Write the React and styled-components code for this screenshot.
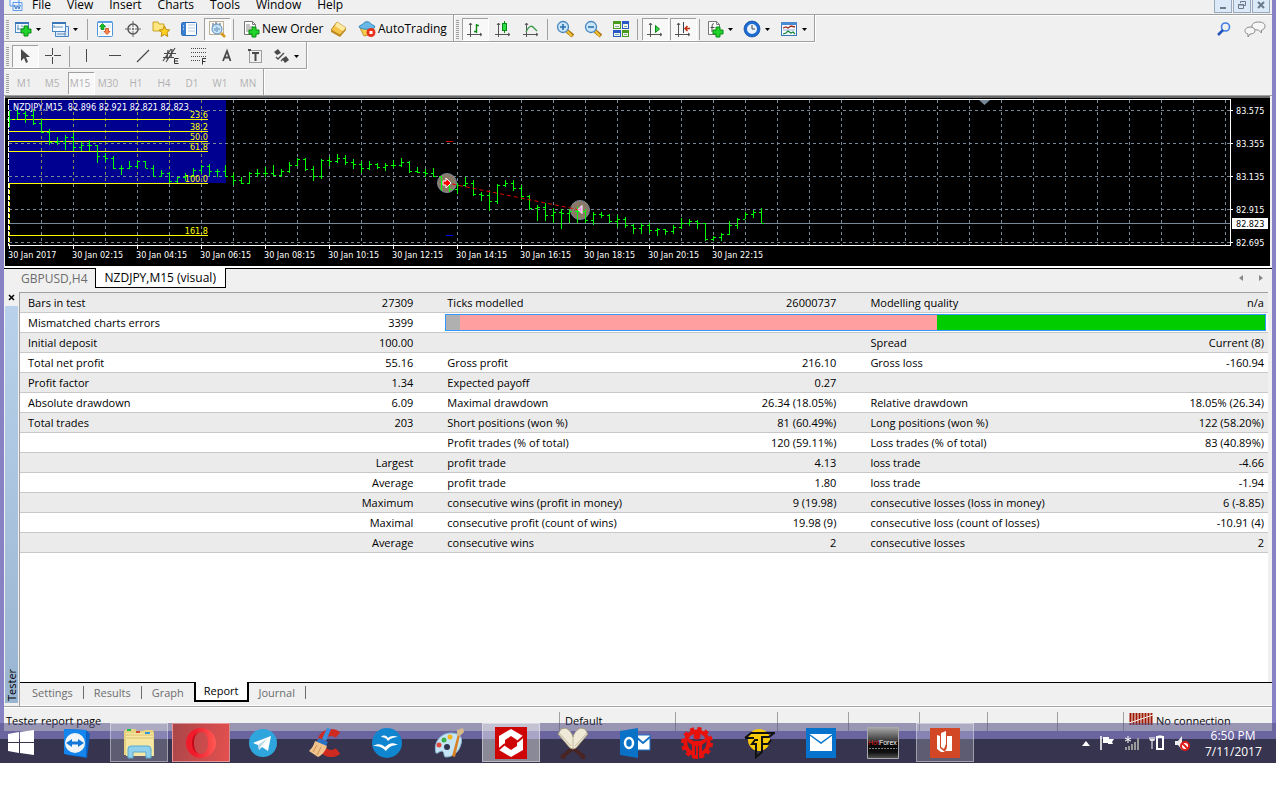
import React from 'react';
import styled, { createGlobalStyle, css } from 'styled-components';

const Colours = {
  face: '#f0f0f0',
  frame: '#8782c3',
  shadow: '#a0a0a0',
  muted: '#6d6d6d',
  grid: '#778899',
  bar: '#00ff00',
  fibo: '#ffff00',
};
const fontUi = '"Open Sans", "Noto Sans", sans-serif';
const fontChart = '"DejaVu Sans Condensed", "DejaVu Sans", sans-serif';

const GlobalStyle = createGlobalStyle`
  * {
    box-sizing: border-box;
  }
  body {
    margin: 0;
    background: #fff;
    color: #000;
    font-family: ${fontUi};
    font-size: 11px;
    line-height: 16px;
  }
  button {
    border: 0;
    padding: 0;
    background: none;
    color: inherit;
    font: inherit;
  }
  svg {
    display: block;
    flex: none;
  }
`

const Screen = styled.div`
  margin-right: 4px;
  overflow: hidden;
`
const Terminal = styled.main`
  border: solid ${Colours.frame};
  border-width: 0 4px;
  background: ${Colours.face};
`

/* menu */
const MenuBar = styled.header`
  display: flex;
  align-items: flex-end;
  height: 15px;
  padding-left: 5px;
  border-bottom: 1px solid ${Colours.shadow};
  box-shadow: 0 1px #fff;
`
const MenuItems = styled.nav`
  display: flex;
  flex: 1;
  gap: 16px;
  padding: 0 0 4px 9px;
  font-size: 12px;
  line-height: 10px;
`
const WindowButtons = styled.div`
  display: flex;
  gap: 1px;
  padding: 0 2px 1px 0;
`
const WindowButton = styled.button`
  display: flex;
  align-items: flex-end;
  justify-content: center;
  width: 18px;
  height: 16px;
  padding-bottom: 3px;
  border: 1px solid #98a9bd;
  background: #dce9f6;
`

/* toolbars */
const ToolRow = styled.div`
  display: flex;
  height: 27px;
  ${p => p.$last && css`
    border-bottom: 1px solid ${Colours.shadow};
  `}
`
const Toolbar = styled.div`
  display: flex;
  align-items: center;
  padding: 2px 0 0 2px;
  border: solid ${Colours.shadow};
  border-width: 0 1px 1px 0;
  box-shadow: 1px 1px #fff;
  ${p => p.$open && css`
    border-bottom: 0;
    box-shadow: 1px 0 #fff;
  `}
`
const Grip = styled.span`
  width: 3px;
  height: 19px;
  margin-right: 2px;
  background: repeating-linear-gradient(#a0a0a0 0 1px, #f0f0f0 1px 2px);
`
const Divider = styled.span`
  width: 1px;
  height: 21px;
  margin: 0 3px 0 2px;
  background: ${Colours.shadow};
`
const Tool = styled.button`
  display: flex;
  align-items: center;
  justify-content: center;
  width: 26px;
  height: 22px;
  margin: 0 1px;
  color: #000;
  &:disabled {
    padding-right: 2px;
    color: #b0b0b0;
    font-size: 10px;
  }
  ${p => p.$pressed && css`
    background: #f8f8f8;
    box-shadow: inset 1px 1px #a0a0a0, 1px 1px #fff;
  `}
`
const DropTool = styled.button`
  display: flex;
  align-items: center;
  gap: 4px;
  width: 37px;
  height: 22px;
  padding-left: 3px;
`
const TextTool = styled.button`
  display: flex;
  align-items: center;
  gap: 2px;
  width: ${p => p.$width};
  height: 22px;
  padding-left: 5px;
  font-size: 12px;
  line-height: 14px;
  white-space: nowrap;
`
const ToolEnd = styled.div`
  display: flex;
  align-items: center;
  gap: 12px;
  margin-left: auto;
  padding-right: 6px;
`

/* chart */
const ChartWindow = styled.section`
  display: flex;
  margin: 0 2px 0 1px;
  padding-left: 1px;
  border-top: 2px solid #696969;
  border-bottom: 2px solid #fff;
  background: #000;
`
const Plot = styled.svg`
  flex: 1;
  min-width: 0;
  height: 168px;
  font-family: ${fontChart};
  font-size: 9px;
`
const PriceScale = styled.svg`
  width: 40px;
  height: 168px;
  font-family: ${fontChart};
  font-size: 9px;
`

/* tabs */
const TabBar = styled.div`
  display: flex;
  height: 24px;
  padding-left: 1px;
  border-top: 1px solid #000;
  color: ${Colours.muted};
`
const ChartTab = styled.button`
  height: 19px;
  padding: 0 7px 0 16px;
  font-size: 12px;
  line-height: 16px;
  ${p => p.$active && css`
    padding: 0 9px;
    margin-top: -1px;
    height: 20px;
    border: solid #000;
    border-width: 0 1px 1px;
    background: #fff;
    color: #000;
  `}
`
const TabArrows = styled.div`
  display: flex;
  gap: 13px;
  margin-left: auto;
  padding: 5px 8px 0 0;
`
const TesterTabs = styled.div`
  display: flex;
  align-items: flex-start;
  height: 24px;
  border-top: 1px solid #000;
  border-bottom: 1px solid #fff;
  padding-left: 2px;
  background: ${Colours.face};
  color: ${Colours.muted};
`
const TesterTab = styled.button`
  height: 13px;
  margin-top: 3px;
  padding: 0 10px;
  border-right: ${p => (p.$bar ? `1px solid ${Colours.muted}` : '0')};
  line-height: 10px;
  ${p => p.$active && css`
    height: 20px;
    margin-top: -1px;
    padding: 0 8px;
    line-height: 18px;
    border: solid #000;
    border-width: 0 2px 2px;
    background: #fff;
    color: #000;
  `}
`

/* tester */
const Tester = styled.section`
  display: flex;
  border-bottom: 1px solid ${Colours.shadow};
`
const TesterSide = styled.div`
  display: flex;
  flex-direction: column;
  align-items: center;
  width: 15px;
  padding: 0 1px 3px;
`
const CloseButton = styled.button`
  display: flex;
  align-items: center;
  justify-content: center;
  width: 13px;
  height: 14px;
  padding-bottom: 4px;
`
const TesterTitle = styled.div`
  flex: 1;
  width: 13px;
  padding-top: 2px;
  writing-mode: vertical-rl;
  transform: rotate(180deg);
  background: linear-gradient(#99b4d1, #b9d1ea);
  line-height: 13px;
`
const TesterBody = styled.div`
  flex: 1;
  min-width: 0;
  border-left: 1px solid ${Colours.shadow};
`
const ReportArea = styled.div`
  min-height: 390px;
  margin-right: 4px;
  border-top: 1px solid ${Colours.shadow};
  background: #fff;
`
const ReportTable = styled.table`
  width: 100%;
  table-layout: fixed;
  border-collapse: separate;
  border-spacing: 0;
  td {
    height: 20px;
    padding: 0 0 0 8px;
    border-bottom: 1px solid #c8c8c8;
    line-height: 19px;
    white-space: nowrap;
  }
  tr:nth-child(odd) td {
    background: #ebebeb;
  }
  td:nth-child(even) {
    padding: 0 26px 0 0;
    text-align: right;
  }
  td:last-child {
    padding-right: 4px;
  }
  td[colspan] {
    padding: 1px 2px 1px 6px;
  }
`
const Quality = styled.div`
  display: flex;
  height: 17px;
  border: 1px solid #3399ff;
  background: #00cc00;
`
const QualityPart = styled.span`
  background: ${p => p.$colour};
`

/* status bar */
const StatusBar = styled.footer`
  display: flex;
  height: 24px;
  padding-top: 4px;
  border-top: 1px solid #fff;
  line-height: 18px;
`
const StatusCell = styled.div`
  display: flex;
  gap: 3px;
  flex: ${p => (p.$width ? `0 0 ${p.$width}px` : '1')};
  padding-left: ${p => (p.$width ? '5px' : '2px')};
  border-left: ${p => (p.$width ? `1px solid ${Colours.shadow}` : '0')};
`

/* taskbar */
const Taskbar = styled.footer`
  position: relative;
  display: flex;
  gap: 4px;
  height: 40px;
  margin-top: -8px;
  color: #fff;
  background: linear-gradient(
    rgba(80, 76, 130, .55) 0 8px,
    #6a659f 8px 16px,
    #36344f 16px
  );
`
const StartButton = styled.button`
  width: 44px;
  padding-left: 8px;
`
const TaskButton = styled.button`
  display: flex;
  align-items: center;
  justify-content: center;
  width: 58px;
  height: 39px;
  ${p => p.$tint && css`
    border: 1px solid rgba(255, 255, 255, .4);
    background: ${p.$tint};
  `}
`
const Tray = styled.div`
  display: flex;
  align-items: center;
  gap: 9px;
  margin-left: auto;
  padding-right: 15px;
`
const Clock = styled.time`
  width: 56px;
  margin-left: 6px;
  padding-top: 2px;
  font-size: 12px;
  line-height: 16px;
  text-align: center;
  white-space: nowrap;
`

const Icon = ({ size = 18, crisp, children }) => (
  <svg width={size} height={size} viewBox={`0 0 ${size} ${size}`} fill="none" shapeRendering={crisp ? 'crispEdges' : 'auto'} aria-hidden="true">
    {children}
  </svg>
);

const Caret = () => (
  <svg width="5" height="3" viewBox="0 0 5 3" aria-hidden="true"><path d="M0 0h5L2.5 3z" fill="#000" /></svg>
);

const Plus = ({ x = 8, y = 8 }) => (
  <path transform={`translate(${x} ${y})`} d="M3 0h4v3h3v4h-3v3h-4v-3h-3v-4h3z" fill="#1fd32b" stroke="#0a8a14" strokeWidth="1" />
);

const MdiIcon = () => (
  <Icon size={14}>
    <path d="M1 0v6h9V0M4 2.500h9v8H4z" fill="#eaf3ff" stroke="#5b9bea" />
    <path d="M5 5l2 4 1.500-3L10 9l1.500-4" stroke="#3a78c8" />
  </Icon>
);
const NewChartIcon = () => (
  <Icon>
    <rect x="1.5" y="2.5" width="13" height="10" fill="#eef6ff" stroke="#4a86c5" />
    <path d="M1 3h14" stroke="#3b77b8" strokeWidth="2" />
    <path d="M4 5v5M3 9h8M8 5v2" stroke="#6890b8" />
    <Plus x={7} y={6} />
  </Icon>
);
const ProfilesIcon = () => (
  <Icon>
    <path d="M4.500 6.500h13v10h-13z" fill="#dcebfb" stroke="#4a86c5" />
    <rect x="1.500" y="2.500" width="13" height="9" fill="#f3f9ff" stroke="#4a86c5" />
    <path d="M1 3h14" stroke="#3b77b8" strokeWidth="2" />
    <path d="M3 5v3M3 7h9M6 14h9M14 12v4" stroke="#6890b8" />
  </Icon>
);
const MarketIcon = () => (
  <Icon>
    <rect x="1.500" y="1.500" width="15" height="15" rx="1" fill="#fff" stroke="#4f95da" />
    <path d="M2 2h14" stroke="#5ba2e4" strokeWidth="2" />
    <path d="M9 5h6M9 7h6M3 12h5M3 14h5" stroke="#cfe0f0" />
    <path d="M6.500 3.500l3 3H8v3H5v-3H3.500z" fill="#17c227" stroke="#0a8a14" strokeWidth=".8" />
    <path d="M11 14.500l-3-3h1.500v-3h3v3H14z" fill="#ff8a4a" stroke="#c6421b" strokeWidth=".8" />
  </Icon>
);
const CrosshairIcon = () => (
  <Icon>
    <circle cx="9" cy="9" r="5" stroke="#555" strokeWidth="1.500" />
    <path d="M9 1v6M9 11v6M1 9h6M11 9h6" stroke="#666" />
    <circle cx="9" cy="9" r="1" fill="#555" />
  </Icon>
);
const NavigatorIcon = () => (
  <Icon>
    <path d="M1 2h5l1 2h5v7H1z" fill="#ffe680" stroke="#c9a227" />
    <path d="M12.500 6l1.600 3.600 3.600.4-2.700 2.500.8 4-3.300-2-3.400 2 .8-4L7.200 10l3.700-.4z" fill="#ffd21f" stroke="#b98a12" />
  </Icon>
);
const TerminalIcon = () => (
  <Icon>
    <rect x="1.500" y="2.500" width="15" height="13" rx="1" fill="#fff" stroke="#2a6cbb" />
    <rect x="2" y="3" width="4" height="12" fill="#3c7fd0" />
    <path d="M3 6h1M3 9h1" stroke="#fff" />
    <path d="M8 5h7M8 8h7M8 11h7" stroke="#b7cbe2" />
  </Icon>
);
const TesterIcon = () => (
  <Icon>
    <rect x="1.500" y="1.500" width="14" height="13" fill="#fafafa" stroke="#bbb093" />
    <path d="M5 3v4M8 2v5M12 3v3" stroke="#556" />
    <circle cx="9" cy="9" r="5" fill="#bfe0f8" fillOpacity=".85" stroke="#5d8db8" />
    <path d="M7 11V8M9 12V7M11 10V8" stroke="#5586b3" />
    <path d="M13 13l4 4" stroke="#d59b1f" strokeWidth="2.500" />
  </Icon>
);
const OrderIcon = ({ fx }) => (
  <Icon>
    <path d="M2.500 1.500h8l3 3v10h-11z" fill="#fff" stroke="#777" />
    <path d="M10.500 1.500v3h3" stroke="#777" />
    {fx
      ? <path d="M8 4c-2-1-2 1-2 8M4.500 7.500h4" stroke="#444" />
      : <path d="M4 5h4M4 7h7M4 9h5M4 11h4" stroke="#888" />}
    <Plus x={7} y={7} />
  </Icon>
);
const EditorIcon = () => (
  <Icon>
    <path d="M7 2l9 6-6 7-9-5z" fill="#f4c54a" stroke="#b9831e" />
    <path d="M7 2l9 6-3 3-8-5z" fill="#ffe9a0" />
    <path d="M1 10l9 5v2l-9-5zM10 15l6-7v2l-6 7z" fill="#c08a20" />
  </Icon>
);
const AutoIcon = () => (
  <Icon>
    <path d="M2 8l4 8 8-2 2-6z" fill="#f3ce4d" stroke="#c4952a" />
    <path d="M1 7c0-2 4-2 4-3 1-3 7-3 8 0 0 1 4 1 4 3-3 3-13 3-16 0z" fill="#69b9e8" stroke="#3488bd" />
    <circle cx="13" cy="12.500" r="4.500" fill="#e8321e" />
    <rect x="11.500" y="11" width="3" height="3" fill="#fff" />
  </Icon>
);
const Axes = () => <path d="M4.500 3v14M1 14.500h15M3 5l1.500-2L6 5M14 13l2 1.500-2 1.500" stroke="#555" />;
const BarsIcon = () => (
  <Icon><Axes /><path d="M10.500 4v9M8 11.500h2.500M10.500 5.500H13" stroke="#0a8a14" strokeWidth="1.400" /></Icon>
);
const CandleIcon = () => (
  <Icon><Axes /><path d="M10.500 1v12" stroke="#0a8a14" /><rect x="8.500" y="3.500" width="4" height="7" fill="#2fdc45" stroke="#0a8a14" /></Icon>
);
const LineIcon = () => (
  <Icon><Axes /><path d="M4 12c3-7 6-6 7-5l4 4" stroke="#3a9a48" strokeWidth="1.300" /></Icon>
);
const ZoomIcon = ({ plus }) => (
  <Icon>
    <path d="M11 11l6 5" stroke="#a87410" strokeWidth="4" />
    <path d="M11 11l5 5" stroke="#f1c435" strokeWidth="2" />
    <circle cx="7" cy="7" r="5.500" fill="#c9e6fb" stroke="#4785bd" strokeWidth="1.300" />
    <path d={plus ? 'M4 7h6M7 4v6' : 'M4 7h6'} stroke="#2d6fae" strokeWidth="1.600" />
  </Icon>
);
const TileIcon = () => (
  <Icon crisp>
    <path d="M1 1h8v8H1zM10 10h7v7h-7z" fill="#4a9a1c" />
    <path d="M10 1h7v8h-7zM1 10h8v7H1z" fill="#2758c4" />
    <path d="M2 4h6v4H2zM11 4h5v4h-5zM2 13h6v3H2zM11 13h5v3h-5z" fill="#eef6ea" />
    <path d="M3 6h4M12 6h3M3 14h4M12 14h3" stroke="#8aa" />
  </Icon>
);
const ScrollIcon = () => (
  <Icon><Axes /><path d="M9.500 5.500l4 3.500-4 3.500z" fill="#35d34a" stroke="#0a8a14" /></Icon>
);
const ShiftIcon = () => (
  <Icon><Axes /><path d="M9.500 2v11" stroke="#345" /><path d="M16 8.500h-5M13.500 6L11 8.500l2.500 2.500" stroke="#c22f10" strokeWidth="1.500" /></Icon>
);
const ClockIcon = () => (
  <Icon>
    <circle cx="9" cy="9" r="6.500" fill="#e9f3fd" stroke="#1f6cd0" strokeWidth="3" />
    <circle cx="9" cy="9" r="8" stroke="#0e4a9c" strokeWidth=".7" />
    <path d="M9 5v4h3" stroke="#444" />
  </Icon>
);
const TemplateIcon = () => (
  <Icon>
    <rect x="1.500" y="2.500" width="15" height="13" fill="#f5faff" stroke="#3b77b8" />
    <path d="M1 3.500h16" stroke="#4a8ad0" strokeWidth="3" />
    <path d="M3 8l3-1 2 1 3-2 4 1" stroke="#a02a1c" strokeWidth="1.300" />
    <path d="M3 10h12" stroke="#9bb8d6" />
    <path d="M3 14l3-1 2-2 3 2 2-1 2 2" stroke="#15883a" strokeWidth="1.200" />
  </Icon>
);
const SearchIcon = () => (
  <Icon size={16}>
    <circle cx="9.500" cy="6" r="4" stroke="#3f7de0" strokeWidth="1.600" />
    <path d="M7 9l-5 5" stroke="#2453b8" strokeWidth="2.500" />
  </Icon>
);
const ChatIcon = () => (
  <svg width="22" height="18" viewBox="0 0 22 18" fill="#f6f6f6" stroke="#8b8b8b" aria-hidden="true">
    <path d="M14.500 2c4 0 6.500 1.500 6.500 4s-2 4-3.500 4v3l-3-3C10 10 8 8.500 8 6s2.500-4 6.500-4z" />
    <path d="M6 7c3 0 5 1.500 5 3.700S9 14 6 14l-2 3v-3c-2-.5-3-1.500-3-3.300S3 7 6 7z" />
  </svg>
);
const CursorIcon = () => <Icon><path d="M5 2v12l3-3 2 5 2-1-2-5h4z" fill="#4a4a4a" /></Icon>;
const CrossIcon = () => <Icon crisp><path d="M8.500 1v7M8.500 10v7M1 8.500h7M10 8.500h7" stroke="#4a4a4a" /></Icon>;
const VLineIcon = () => <Icon crisp><path d="M8.500 2v13" stroke="#4a4a4a" /></Icon>;
const HLineIcon = () => <Icon crisp><path d="M3 8.500h12" stroke="#4a4a4a" /></Icon>;
const TrendIcon = () => <Icon><path d="M3 15L15 3" stroke="#4a4a4a" strokeWidth="1.200" /></Icon>;
const ChannelIcon = () => (
  <Icon>
    <path d="M1 14L9 2M4 15l9-14M2 6.500h12M1 10.500h11M6 3l-1 9M10 2L9 11" stroke="#4a4a4a" strokeWidth="1.200" />
    <path d="M16.500 11.500h-4v5h4M12.500 14h3.500" stroke="#333" />
  </Icon>
);
const FiboIcon = () => (
  <Icon>
    <path d="M1 1.500h15M1 5.500h15M1 9.500h15M1 13.500h9" stroke="#4a4a4a" strokeDasharray="1 1" />
    <path d="M16 11.500h-3.500v6M12.500 14.500h3" stroke="#333" />
  </Icon>
);
const TextIcon = () => <Icon><path d="M5 14L9 4l3.500 10M6.500 10.500h5" stroke="#4a4a4a" strokeWidth="1.800" /></Icon>;
const LabelIcon = () => (
  <Icon>
    <rect x="3.500" y="3.500" width="12" height="12" stroke="#4a4a4a" strokeDasharray="1 1" />
    <path d="M6 6h7M9.500 6v8" stroke="#4a4a4a" strokeWidth="2" />
    <path d="M2 2h3v2H2z" fill="#4a4a4a" />
  </Icon>
);
const ArrowsIcon = () => (
  <Icon>
    <path d="M2 5l4-3 3 4-4 2zM10 12l4-3 3 4-4 3z" fill="#4a4a4a" />
    <path d="M4 10l2 2 6-6M11 12l-2 2" stroke="#4a4a4a" strokeWidth="1.300" />
  </Icon>
);

// high, low, close of every M15 bar, three steps to a pixel from the top of the plot
const quotes = [
  [50, 98, 74], [46, 76, 56], [50, 86, 62], [46, 92, 87], [75, 116, 115], [106, 152, 145], [128, 152, 140],
  [122, 168, 130], [118, 170, 160], [145, 172, 152], [138, 170, 154], [153, 206, 187], [178, 204, 193],
  [187, 226, 223], [212, 243, 221], [202, 226, 215], [200, 222, 202], [200, 222, 221], [213, 246, 245],
  [228, 248, 238], [235, 268, 260], [250, 268, 250], [238, 262, 245], [222, 248, 228], [212, 240, 217],
  [210, 246, 232], [226, 250, 230], [213, 248, 247], [236, 272, 259], [250, 270, 268], [235, 270, 238],
  [226, 250, 238], [220, 250, 236], [213, 246, 242], [226, 248, 230], [205, 236, 212], [192, 216, 196],
  [193, 230, 226], [217, 260, 246], [196, 254, 198], [190, 215, 202], [180, 207, 192], [183, 213, 205],
  [196, 225, 209], [202, 238, 223], [202, 228, 211], [207, 226, 219], [206, 232, 212], [197, 222, 214],
  [192, 218, 205], [201, 236, 232], [220, 238, 235], [226, 248, 238], [222, 250, 247], [245, 290, 268],
  [262, 295, 285], [268, 300, 272], [249, 278, 266], [258, 305, 300], [294, 320, 303], [296, 350, 322],
  [270, 330, 274], [258, 280, 268], [258, 292, 281], [274, 318, 307], [303, 348, 341], [333, 380, 340],
  [328, 380, 364], [342, 388, 355], [345, 405, 356], [345, 388, 352], [340, 388, 350], [345, 388, 379],
  [354, 392, 360], [354, 372, 364], [360, 388, 380], [364, 400, 376], [370, 403, 394], [390, 420, 403],
  [388, 420, 394], [388, 418, 409], [402, 426, 406], [405, 423, 412], [393, 420, 398], [372, 405, 388],
  [375, 396, 382], [378, 405, 388], [388, 440, 436], [426, 442, 430], [417, 440, 421], [381, 424, 394],
  [372, 405, 374], [354, 376, 361], [348, 372, 355], [342, 388, 388],
];
const quoteY = step => Math.round(step / 3) - 4;

const prices = [[12, '83.575'], [45, '83.355'], [78, '83.135'], [111, '82.915'], [144, '82.695']];
const times = [
  '30 Jan 2017', '30 Jan 02:15', '30 Jan 04:15', '30 Jan 06:15', '30 Jan 08:15', '30 Jan 10:15',
  '30 Jan 12:15', '30 Jan 14:15', '30 Jan 16:15', '30 Jan 18:15', '30 Jan 20:15', '30 Jan 22:15',
];
const fibo = [[21, '23.6'], [33, '38.2'], [43, '50.0'], [53, '61.8'], [85, '100.0'], [137, '161.8']];
const gridColumns = Array.from({ length: 38 }, (_, i) => 35.5 + i * 32);

const barPath = quotes.map(([high, low, close], i) => {
  const x = 3 + i * 8;
  const open = i ? quotes[i - 1][2] : close;
  return `M${x + 0.5} ${quoteY(high)}V${quoteY(low)}M${x - 2} ${quoteY(open) + 0.5}h2M${x + 1} ${quoteY(close) + 0.5}h2`;
}).join('');

const PriceChart = () => (
  <Plot role="img" aria-label="NZDJPY M15 chart">
    <rect x="3" y="2" width="217" height="83" fill="#000090" />
    <g stroke={Colours.grid} strokeDasharray="3 3" shapeRendering="crispEdges">
      {prices.map(([y]) => <line key={y} x1="3" x2="100%" y1={y + 0.5} y2={y + 0.5} />)}
      {gridColumns.map(x => <line key={x} x1={x} x2={x} y1="2" y2="147" />)}
      {gridColumns.slice(0, 6).map(x => <line key={x} x1={x} x2={x} y1="2" y2="85" stroke="#8a8a50" />)}
    </g>
    <g shapeRendering="crispEdges">
      <line x1="3" x2="100%" y1="125.5" y2="125.5" stroke={Colours.grid} />
      {fibo.map(([y]) => <line key={y} x1="3" x2="202" y1={y + 0.5} y2={y + 0.5} stroke={Colours.fibo} />)}
      <line x1="3.5" x2="3.5" y1="86" y2="147" stroke={Colours.fibo} strokeDasharray="4 2" />
      <path d="M440 43.500h7" stroke="#c00" />
      <path d="M440 137.500h7" stroke="#00f" />
    </g>
    <circle cx="441" cy="85" r="9.500" fill="#8b7968" stroke="#778899" />
    <circle cx="574" cy="112" r="9.500" fill="#8b7968" stroke="#778899" />
    <path d={barPath} stroke={Colours.bar} shapeRendering="crispEdges" />
    <path d="M446 86L574 112" stroke="#e00000" strokeDasharray="4 3" />
    <path d="M437 83h3v-3l5 5-5 5v-3h-3z" fill="#f00" stroke="#fff" />
    <path d="M576 107.500v8l-4-4z" fill="#ee82ee" stroke="#fff" />
    <path d="M973 2h11l-5.500 5z" fill={Colours.grid} />
    <g stroke="#fff" fill="none" shapeRendering="crispEdges">
      <line x1="2" x2="100%" y1="1.500" y2="1.500" />
      <line x1="2" x2="100%" y1="147.500" y2="147.500" />
      <line x1="2.500" x2="2.500" y1="1" y2="148" strokeDasharray="5 1" />
      {times.map((time, i) => <line key={time} x1={3.5 + i * 64} x2={3.5 + i * 64} y1="148" y2="151" />)}
    </g>
    <g fill="#fff">
      <text x="7" y="12">NZDJPY,M15&nbsp; 82.896 82.921 82.821 82.823</text>
      {times.map((time, i) => <text key={time} x={2 + i * 64} y="160">{time}</text>)}
    </g>
    <g fill={Colours.fibo} textAnchor="end">
      {fibo.map(([y, level]) => <text key={level} x="202" y={y - 1}>{level}</text>)}
    </g>
  </Plot>
);

const PriceAxis = () => (
  <PriceScale aria-hidden="true">
    <path d="M.5 1v147" stroke="#fff" shapeRendering="crispEdges" />
    {prices.map(([y, price]) => (
      <g key={price} fill="#fff">
        <path d={`M1 ${y}h2v1h-2z`} />
        <text x="6" y={y + 4}>{price}</text>
      </g>
    ))}
    <rect x="2" y="120" width="36" height="11" fill="#fff" />
    <text x="6" y="129" fill="#000">82.823</text>
  </PriceScale>
);

const reportRows = [
  ['Bars in test', '27309', 'Ticks modelled', '26000737', 'Modelling quality', 'n/a'],
  ['Mismatched charts errors', '3399'],
  ['Initial deposit', '100.00', '', '', 'Spread', 'Current (8)'],
  ['Total net profit', '55.16', 'Gross profit', '216.10', 'Gross loss', '-160.94'],
  ['Profit factor', '1.34', 'Expected payoff', '0.27', '', ''],
  ['Absolute drawdown', '6.09', 'Maximal drawdown', '26.34 (18.05%)', 'Relative drawdown', '18.05% (26.34)'],
  ['Total trades', '203', 'Short positions (won %)', '81 (60.49%)', 'Long positions (won %)', '122 (58.20%)'],
  ['', '', 'Profit trades (% of total)', '120 (59.11%)', 'Loss trades (% of total)', '83 (40.89%)'],
  ['', 'Largest', 'profit trade', '4.13', 'loss trade', '-4.66'],
  ['', 'Average', 'profit trade', '1.80', 'loss trade', '-1.94'],
  ['', 'Maximum', 'consecutive wins (profit in money)', '9 (19.98)', 'consecutive losses (loss in money)', '6 (-8.85)'],
  ['', 'Maximal', 'consecutive profit (count of wins)', '19.98 (9)', 'consecutive loss (count of losses)', '-10.91 (4)'],
  ['', 'Average', 'consecutive wins', '2', 'consecutive losses', '2'],
];
const columnWidths = ['20%', '13.6%', '20%', '13.9%', '20%', '12.5%'];
const qualityParts = [['#b0b0b0', '1.7%'], ['#ff9f9f', '58.2%']];

const Report = () => (
  <ReportTable>
    <colgroup>{columnWidths.map((width, i) => <col key={i} width={width} />)}</colgroup>
    <tbody>
      {reportRows.map((row, i) => (
        <tr key={i}>
          {row.map((cell, j) => <td key={j}>{cell}</td>)}
          {row.length === 2 && (
            <td colSpan="4">
              <Quality>
                {qualityParts.map(([colour, width]) => <QualityPart key={colour} $colour={colour} style={{ width }} />)}
              </Quality>
            </td>
          )}
        </tr>
      ))}
    </tbody>
  </ReportTable>
);

/* taskbar icons, all on a 32px field */
const TeamViewerIcon = () => (
  <Icon size={32}>
    <path d="M3 2l22 1 4 4-3 24-20-3z" fill="#0b62c4" />
    <path d="M3 2l22 1v27L3 27z" fill="#1585ee" />
    <circle cx="14" cy="16" r="10" fill="#f2f5f8" />
    <path d="M5 16l6-4v2.500h6V12l6 4-6 4v-2.500h-6V20z" fill="#1278da" />
  </Icon>
);
const ExplorerIcon = () => (
  <Icon size={32}>
    <path d="M1 4l3-2h8l2 2h6l2-1h8l1 3v22H1z" fill="#e9d27c" />
    <path d="M3 6h27l1 23H3z" fill="#f6e7a4" />
    <path d="M3 8h27M3 11h27" stroke="#dcc26c" />
    <path d="M4 3h4" stroke="#1db954" strokeWidth="2" /><path d="M13 5h4" stroke="#d24a2c" strokeWidth="2" /><path d="M22 6h5" stroke="#3296dc" strokeWidth="2" />
    <path d="M5 31V22q0-3 3-3h17q3 0 3 3v9h-5v-6H10v6z" fill="#8fd0ec" stroke="#5aa9cf" />
  </Icon>
);
const OperaIcon = () => (
  <Icon size={32}>
    <defs>
      <linearGradient id="opera"><stop offset=".3" stopColor="#f01c2c" /><stop offset="1" stopColor="#ff5a55" /></linearGradient>
    </defs>
    <path fillRule="evenodd" d="M16 1c9 0 15 7 15 15s-6 15-15 15S1 24 1 16 7 1 16 1zm0 4c-5 0-7 5-7 11s2 11 7 11 7-5 7-11-2-11-7-11z" fill="url(#opera)" />
    <path d="M14 5c-4 2-5 6-5 11s1 9 5 11c-4-1-7-5-7-11s3-10 7-11z" fill="#c40a18" />
  </Icon>
);
const TelegramIcon = () => (
  <Icon size={32}>
    <circle cx="16" cy="16" r="14" fill="#2ea5dc" />
    <path d="M6 16l18-7-3 15-6-4-3 3-1-5z" fill="#fff" /><path d="M11 18l10-7-7 8-2 4z" fill="#b9d7e6" />
  </Icon>
);
const CleanerIcon = () => (
  <Icon size={32}>
    <path d="M29 8A10.500 10.500 0 1 0 29 24" stroke="#cf2a20" strokeWidth="7" />
    <path d="M18 1l4 1-5 12-4-2z" fill="#3a8edb" />
    <path d="M10 11l9 4-2 4-10-4z" fill="#2a72c4" />
    <path d="M6 14l12 5c-2 6-5 9-9 11L0 24c3-3 5-6 6-10z" fill="#f2c48d" /><path d="M8 18l-4 7M12 20l-4 8" stroke="#c98f55" />
  </Icon>
);
const OfficeIcon = () => (
  <Icon size={32}>
    <circle cx="16" cy="16" r="15" fill="#0f86cf" />
    <path d="M10 10c3-3 6-1 7 1 2-2 6-3 10-1-4 0-7 1-10 4-2-3-4-4-7-4zM2 19c5-3 9-2 12 1 4-4 8-5 13-2-6 0-9 2-12 6-4-4-7-5-13-5z" fill="#fff" />
  </Icon>
);
const PaintIcon = () => (
  <Icon size={32}>
    <path d="M3 26C0 15 8 6 18 6c9 0 12 5 10 11-2 8-8 13-15 13-3 0-1-5-4-6-3 0-4 3-6 2z" fill="#c5e4f5" stroke="#8bb7d1" />
    <circle cx="6" cy="18" r="2.500" fill="#e04a3c" /><circle cx="11" cy="13" r="2.500" fill="#3faf4a" /><circle cx="17" cy="10" r="2.500" fill="#f2b51e" /><circle cx="14" cy="20" r="3" fill="#303450" />
    <path d="M27 8l-5 22-3-1 6-22z" fill="#d98128" /><path d="M24 3l6-2 1 4-4 4-3-1z" fill="#d8b98a" />
  </Icon>
);
const HexIcon = () => (
  <Icon size={32}>
    <path d="M0 0h32v32H0z" fill="#cf0505" />
    <path d="M16 2l12 7v14l-12 7-12-7V9z" fill="#fff" />
    <path d="M16 9l6 4v6l-6 4-6-4v-6z" fill="#cf0505" />
    <path d="M3 23l7-6M29 9l-7 6" stroke="#cf0505" strokeWidth="2" />
  </Icon>
);
const BookIcon = () => (
  <Icon size={32}>
    <path d="M5 30L21 17M27 30L11 17M4 31l4-2M28 31l-4-2" stroke="#4a2422" strokeWidth="4" />
    <path d="M1 7l12 14 3 1 3-1L31 7l-3-5-4-1c-4 1-7 5-8 9-1-4-4-8-8-9L4 2z" fill="#efe9d8" stroke="#a29880" />
    <path d="M16 10v12M2 6l12 13M30 6L18 19" stroke="#c4b898" />
  </Icon>
);
const OutlookIcon = () => (
  <Icon size={32}>
    <path d="M17 8h14v15H17z" fill="#fff" stroke="#1673c8" /><path d="M17 10l7 6 7-6" stroke="#1673c8" strokeWidth="2" />
    <path d="M1 4l18-3v30L1 28z" fill="#0a72c6" /><ellipse cx="10" cy="16" rx="4" ry="5" stroke="#fff" strokeWidth="2.500" />
  </Icon>
);
const GearIcon = () => (
  <Icon size={32}>
    <circle cx="16" cy="16" r="14" stroke="#e8110c" strokeWidth="4" strokeDasharray="4 3.330" />
    <path d="M13 27A11.500 11.500 0 1 1 19 27" stroke="#e8110c" strokeWidth="4" />
    <circle cx="16" cy="9" r="3.500" fill="#e8110c" />
    <path d="M7 11l6 3h6l6-3v4l-4 3v13h-3V19h-4v12h-3V18l-4-3zM15 18h2v14h-2z" fill="#e8110c" />
  </Icon>
);
const TradeIcon = () => (
  <Icon size={32}>
    <circle cx="16" cy="13" r="11" fill="#f6cb05" />
    <path d="M2 11l6-5h23l-5 4h-7v15l-6 5V17H9l3-4h3M2 11h9M20 17h5l3-4" stroke="#111" strokeWidth="2" />
  </Icon>
);
const MailIcon = () => (
  <Icon size={32}>
    <path d="M1 1h30v30H1z" fill="#0773cc" /><path d="M5 7h22v17H5z" fill="#fff" /><path d="M5 8l11 8 11-8" stroke="#0773cc" strokeWidth="1.500" />
  </Icon>
);
const ForexIcon = () => (
  <svg width="32" height="32" viewBox="0 0 32 32" aria-hidden="true">
    <defs>
      <linearGradient id="gloss" x2="0" y2="1"><stop stopColor="#aaa" /><stop offset=".45" stopColor="#333" /><stop offset=".5" stopColor="#050505" /><stop offset=".8" stopColor="#111" /><stop offset="1" stopColor="#555" /></linearGradient>
    </defs>
    <path d="M.5.5h31v31H.5z" fill="url(#gloss)" stroke="#aaa" />
    <text x="1" y="18" fontFamily="Liberation Sans, sans-serif" fontSize="7" fill="#fff"><tspan fill="#d22">Hot</tspan>Forex</text>
    <path d="M2 21.500h28" stroke="#bbb" strokeWidth=".7" strokeDasharray="2 1" />
  </svg>
);
const OrangeIcon = () => (
  <Icon size={32}>
    <path d="M1 1h30v30H1z" fill="#d24726" />
    <path d="M8 8l3 1v12l5 4h-4l-4-3zM12 6l5-2v13l-2 5-3-2zM18 9h5v15h-7c2-2 2-4 2-6z" fill="#fff" />
  </Icon>
);

const taskbarApps = [
  ['TeamViewer', TeamViewerIcon],
  ['File Explorer', ExplorerIcon, 'rgba(255, 255, 255, .2)'],
  ['Opera', OperaIcon, 'linear-gradient(100deg, #a94649, #e4504f)'],
  ['Telegram', TelegramIcon],
  ['CCleaner', CleanerIcon],
  ['OpenOffice', OfficeIcon],
  ['Paint', PaintIcon],
  ['Terminal', HexIcon, 'rgba(255, 255, 255, .42)'],
  ['Quran', BookIcon],
  ['Outlook', OutlookIcon],
  ['Trader', GearIcon],
  ['Trade', TradeIcon],
  ['Mail', MailIcon],
  ['HotForex', ForexIcon],
  ['Reader', OrangeIcon, 'rgba(255, 255, 255, .2)'],
];

const tools = (list) => list.map(([label, ToolIcon, pressed]) => (
  <Tool key={label} aria-label={label} $pressed={pressed}><ToolIcon /></Tool>
));
const dropTool = (label, icon) => (
  <DropTool aria-label={label}>{icon}<Caret /></DropTool>
);

const App = () => (
  <Screen>
    <GlobalStyle />
    <Terminal>
      <MenuBar>
        <MdiIcon />
        <MenuItems>
          {['File', 'View', 'Insert', 'Charts', 'Tools', 'Window', 'Help'].map(item => <button key={item}>{item}</button>)}
        </MenuItems>
        <WindowButtons>
          <WindowButton aria-label="Minimize"><svg width="8" height="8" aria-hidden="true"><path d="M1 6h6v2H1z" fill="#6b7a8c" /></svg></WindowButton>
          <WindowButton aria-label="Restore"><svg width="8" height="8" fill="none" stroke="#6b7a8c" aria-hidden="true"><path d="M2.500 2V.5h5v4H6M.5 3.500h5v4h-5zM0 4h6" /></svg></WindowButton>
          <WindowButton aria-label="Close"><svg width="8" height="8" aria-hidden="true"><path d="M1 1l6 6M7 1L1 7" stroke="#6b7a8c" strokeWidth="2" /></svg></WindowButton>
        </WindowButtons>
      </MenuBar>

      <ToolRow>
        <Toolbar>
          <Grip />
          {dropTool('New chart', <NewChartIcon />)}
          {dropTool('Profiles', <ProfilesIcon />)}
          <Divider />
          {tools([
            ['Market Watch', MarketIcon], ['Data Window', CrosshairIcon], ['Navigator', NavigatorIcon],
            ['Toggle Terminal', TerminalIcon], ['Strategy Tester', TesterIcon, true],
          ])}
          <Divider />
          <TextTool $width="88px"><OrderIcon />New Order</TextTool>
          {tools([['MetaEditor', EditorIcon]])}
          <TextTool $width="100px"><AutoIcon />AutoTrading</TextTool>
        </Toolbar>
        <Toolbar>
          <Grip />
          {tools([['Bar Chart', BarsIcon, true], ['Candlesticks', CandleIcon], ['Line Chart', LineIcon]])}
          <Divider />
          <Tool aria-label="Zoom In"><ZoomIcon plus /></Tool>
          {tools([['Zoom Out', ZoomIcon], ['Tile Windows', TileIcon]])}
          <Divider />
          {tools([['Auto Scroll', ScrollIcon, true], ['Chart Shift', ShiftIcon, true]])}
          <Divider />
          {dropTool('Indicators', <OrderIcon fx />)}
          {dropTool('Periods', <ClockIcon />)}
          {dropTool('Templates', <TemplateIcon />)}
        </Toolbar>
        <ToolEnd><SearchIcon /><ChatIcon /></ToolEnd>
      </ToolRow>
      <ToolRow>
        <Toolbar>
          <Grip />
          {tools([['Cursor', CursorIcon, true], ['Crosshair', CrossIcon]])}
          <Divider />
          {tools([
            ['Vertical Line', VLineIcon], ['Horizontal Line', HLineIcon], ['Trendline', TrendIcon],
            ['Equidistant Channel', ChannelIcon], ['Fibonacci', FiboIcon], ['Text', TextIcon], ['Text Label', LabelIcon],
          ])}
          {dropTool('Arrows', <ArrowsIcon />)}
        </Toolbar>
      </ToolRow>
      <ToolRow $last>
        <Toolbar $open>
          <Grip />
          {['M1', 'M5', 'M15', 'M30', 'H1', 'H4', 'D1', 'W1', 'MN'].map(period => (
            <Tool key={period} disabled $pressed={period === 'M15'}>{period}</Tool>
          ))}
        </Toolbar>
      </ToolRow>

      <ChartWindow>
        <PriceChart />
        <PriceAxis />
      </ChartWindow>
      <TabBar>
        <ChartTab>GBPUSD,H4</ChartTab>
        <ChartTab $active>NZDJPY,M15 (visual)</ChartTab>
        <TabArrows>
          <svg width="6" height="8" aria-hidden="true"><path d="M4 1v6L0 4z" fill="#888" /></svg>
          <svg width="6" height="8" aria-hidden="true"><path d="M1 1v6l4-3z" fill="#888" /></svg>
        </TabArrows>
      </TabBar>

      <Tester>
        <TesterSide>
          <CloseButton aria-label="Close tester"><svg width="7" height="7" aria-hidden="true"><path d="M1 1l5 5M6 1L1 6" stroke="#000" strokeWidth="1.500" /></svg></CloseButton>
          <TesterTitle>Tester</TesterTitle>
        </TesterSide>
        <TesterBody>
          <ReportArea><Report /></ReportArea>
          <TesterTabs>
            <TesterTab $bar>Settings</TesterTab>
            <TesterTab $bar>Results</TesterTab>
            <TesterTab>Graph</TesterTab>
            <TesterTab $active>Report</TesterTab>
            <TesterTab $bar>Journal</TesterTab>
          </TesterTabs>
        </TesterBody>
      </Tester>

      <StatusBar>
        <StatusCell>Tester report page</StatusCell>
        <StatusCell $width={116}>Default</StatusCell>
        {[102, 71, 71, 68, 70, 66].map((width, i) => <StatusCell key={i} $width={width} />)}
        <StatusCell $width={149}>
          <svg width="24" height="14" aria-hidden="true"><path d="M1.500 1v12M4.500 1v12M7.500 1v12M10.500 1v12M13.500 1v12M16.500 1v12M19.500 1v12M22.500 1v12" stroke="#a01800" strokeWidth="2" /><path d="M0 11L24 3" stroke="#f0f0f0" /></svg>
          No connection
        </StatusCell>
      </StatusBar>
    </Terminal>

    <Taskbar>
      <StartButton aria-label="Start">
        <svg width="26" height="26" viewBox="0 0 26 26" fill="#fff" aria-hidden="true"><path d="M0 4l11-2v10H0zM12 2l14-2v12H12zM0 13h11v10L0 21zM12 13h14v12l-14-2z" /></svg>
      </StartButton>
      {taskbarApps.map(([label, AppIcon, tint]) => (
        <TaskButton key={label} aria-label={label} $tint={tint}><AppIcon /></TaskButton>
      ))}
      <Tray>
        <svg width="8" height="5" aria-hidden="true"><path d="M0 5h8L4 0z" fill="#fff" /></svg>
        <Icon size={16}><path d="M2 1v14" stroke="#fff" strokeWidth="1.500" /><path d="M4 2h6v2h5l-2 3 1 2H9V8H4z" fill="#fff" /></Icon>
        <Icon size={16}><path d="M2 15v-3M5 15v-4M8 15V9M11 15V7M14 15V3" stroke="#999" strokeWidth="2" /><path d="M4 1v7M1 3l6 3M7 3L1 6" stroke="#fff" /></Icon>
        <Icon size={16}><rect x="8" y="2" width="6" height="12" stroke="#fff" strokeWidth="2" /><path d="M9 1h4M3 2v12M1 5h5M1 2v3h4V2" stroke="#fff" /></Icon>
        <Icon size={16}><path d="M1 6h3l4-5v14l-4-5H1z" fill="#eee" /><circle cx="11" cy="11" r="4" fill="#fff" stroke="#e01b1b" strokeWidth="2" /><path d="M8 8l6 6" stroke="#e01b1b" strokeWidth="2" /></Icon>
        <Clock>6:50 PM<br />7/11/2017</Clock>
      </Tray>
    </Taskbar>
  </Screen>
);

export default App;
